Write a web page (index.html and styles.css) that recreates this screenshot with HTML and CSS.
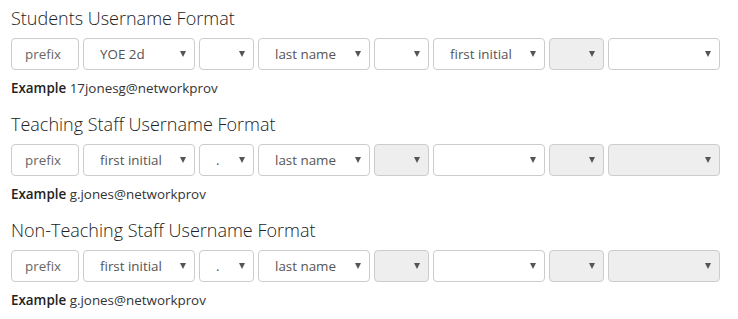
FILE: index.html
```html
<!DOCTYPE html>
<html lang="en">
<head>
  <meta charset="UTF-8" />
  <title>Username Formats</title>
  <link rel="stylesheet" href="styles.css">
</head>
<body>
  <div class="formats">

    <!-- Students -->
    <section class="format">
      <h2>Students Username Format</h2>
      <div class="parts">
        <input class="prefix" type="text" placeholder="prefix" />
        <div class="pick wide"><select><option>YOE 2d</option></select></div>
        <div class="pick narrow"><select><option></option></select></div>
        <div class="pick wide"><select><option>last name</option></select></div>
        <div class="pick narrow"><select><option></option></select></div>
        <div class="pick wide"><select><option>first initial</option></select></div>
        <div class="pick narrow"><select disabled><option></option></select></div>
        <div class="pick wide"><select><option></option></select></div>
      </div>
      <p class="example"><b>Example</b> 17jonesg@networkprov</p>
    </section>

    <!-- Teaching Staff -->
    <section class="format">
      <h2>Teaching Staff Username Format</h2>
      <div class="parts">
        <input class="prefix" type="text" placeholder="prefix" />
        <div class="pick wide"><select><option>first initial</option></select></div>
        <div class="pick narrow"><select><option>.</option></select></div>
        <div class="pick wide"><select><option>last name</option></select></div>
        <div class="pick narrow"><select disabled><option></option></select></div>
        <div class="pick wide"><select><option></option></select></div>
        <div class="pick narrow"><select disabled><option></option></select></div>
        <div class="pick wide"><select disabled><option></option></select></div>
      </div>
      <p class="example"><b>Example</b> g.jones@networkprov</p>
    </section>

    <!-- Non-Teaching Staff -->
    <section class="format">
      <h2>Non-Teaching Staff Username Format</h2>
      <div class="parts">
        <input class="prefix" type="text" placeholder="prefix" />
        <div class="pick wide"><select><option>first initial</option></select></div>
        <div class="pick narrow"><select><option>.</option></select></div>
        <div class="pick wide"><select><option>last name</option></select></div>
        <div class="pick narrow"><select disabled><option></option></select></div>
        <div class="pick wide"><select><option></option></select></div>
        <div class="pick narrow"><select disabled><option></option></select></div>
        <div class="pick wide"><select disabled><option></option></select></div>
      </div>
      <p class="example"><b>Example</b> g.jones@networkprov</p>
    </section>

  </div>
</body>
</html>
```

FILE: styles.css
```css
* {
  margin: 0;
  padding: 0;
  box-sizing: border-box;
}

body {
  font-family: "Open Sans", Lato, sans-serif;
  color: #333;
  background-color: #fff;
}

.formats {
  padding: 6px 11px 0;
}

.format {
  height: 106px;
}

.format h2 {
  font-size: 18px;
  font-weight: 300;
  line-height: 24px;
  margin-bottom: 8px;
  color: #222;
}

.parts {
  display: flex;
  gap: 4px;
}

.prefix,
.pick select {
  height: 32px;
  border: 1px solid #ccc;
  border-radius: 4px;
  font-family: inherit;
  font-size: 13.4px;
  color: #555;
  background-color: #fff;
  outline: none;
}

.prefix {
  width: 68px;
  padding: 0 13px;
}

.prefix::placeholder {
  color: #666;
}

.pick {
  position: relative;
}

.pick.wide {
  width: 112px;
}

.pick.narrow {
  width: 55px;
}

.pick select {
  width: 100%;
  padding: 0 20px 0 16px;
  appearance: none;
  -webkit-appearance: none;
}

.pick select:disabled {
  background-color: #eee;
  opacity: 1;
}

.pick::after {
  content: "";
  position: absolute;
  right: 9px;
  top: 13px;
  border-left: 3.5px solid transparent;
  border-right: 3.5px solid transparent;
  border-top: 6px solid #555;
  pointer-events: none;
}

.example {
  font-size: 13.4px;
  line-height: 17px;
  margin-top: 10px;
  color: #333;
}

.example b {
  font-weight: 600;
  color: #222;
}
```
